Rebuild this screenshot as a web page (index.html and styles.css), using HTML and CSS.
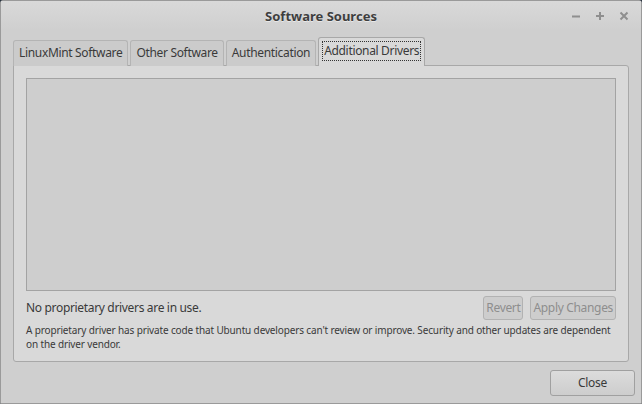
FILE: index.html
```html
<!DOCTYPE html>
<html>
<head>
<meta charset="utf-8">
<link rel="stylesheet" href="styles.css">
</head>
<body>
<div class="window">
  <div class="titlebar">
    <div class="title">Software Sources</div>
    <div class="controls">
      <svg class="ctl" width="10" height="10" viewBox="0 0 10 10"><path d="M1 5.5h8" stroke="#8f8f8f" stroke-width="2"/></svg>
      <svg class="ctl" width="10" height="10" viewBox="0 0 10 10"><path d="M1 5h8M5 1v8" stroke="#8f8f8f" stroke-width="2"/></svg>
      <svg class="ctl" width="10" height="10" viewBox="0 0 10 10"><path d="M1.5 1.5l7 7M8.5 1.5l-7 7" stroke="#8f8f8f" stroke-width="2"/></svg>
    </div>
  </div>
  <div class="body">
    <div class="tabs">
      <div class="tab">LinuxMint Software</div>
      <div class="tab">Other Software</div>
      <div class="tab">Authentication</div>
      <div class="tab active"><span class="focus">Additional Drivers</span></div>
    </div>
    <div class="panel">
      <div class="listbox"></div>
      <div class="statusrow">
        <div class="status">No proprietary drivers are in use.</div>
        <div class="btns">
          <button class="btn disabled">Revert</button>
          <button class="btn disabled">Apply Changes</button>
        </div>
      </div>
      <div class="note">A proprietary driver has private code that Ubuntu developers can't review or improve. Security and other updates are dependent on the driver vendor.</div>
    </div>
    <div class="footer">
      <button class="btn close">Close</button>
    </div>
  </div>
</div>
</body>
</html>
```

FILE: styles.css
```css
html, body {
  margin: 0;
  padding: 0;
  background: #2a3440;
}
body {
  width: 642px;
  height: 404px;
  overflow: hidden;
  font-family: "Noto Sans", "Open Sans", sans-serif;
  font-size: 12px;
  letter-spacing: -0.33px;
  color: #3a3a3a;
}
.window {
  width: 640px;
  height: 402px;
  border: 1px solid #9a9a9a;
  border-radius: 3px 3px 0 0;
  background: #cfcfcf;
  display: flex;
  flex-direction: column;
}
.titlebar {
  height: 29px;
  position: relative;
  display: flex;
  align-items: center;
  justify-content: center;
  background: linear-gradient(#d9d9d9, #cfcfcf);
}
.title {
  font-weight: bold;
  font-size: 13px;
  letter-spacing: 0;
  color: #3e3e3e;
  text-shadow: 0 1px 0 #e8e8e8;
}
.controls {
  position: absolute;
  right: 12px;
  top: 10px;
  display: flex;
  gap: 14px;
}
.ctl { display: block; }
.body {
  flex: 1;
  padding: 7px 12px 0 12px;
  display: flex;
  flex-direction: column;
}
.tabs {
  display: flex;
  gap: 2px;
  align-items: flex-end;
  height: 29px;
  position: relative;
  z-index: 1;
  margin-bottom: -1px;
}
.tab {
  height: 26px;
  box-sizing: border-box;
  padding: 0 5px 2px 5px;
  display: flex;
  align-items: center;
  border: 1px solid #b4b4b4;
  border-bottom: none;
  border-radius: 3px 3px 0 0;
  background: #cbcbcb;
  color: #3a3a3a;
}
.tab.active {
  height: 29px;
  background: #d9d9d9;
  border-color: #a8a8a8;
  padding: 0 3px 2px 3px;
}
.focus {
  border: 1px dotted #333;
  padding: 1px 1px;
  line-height: 16px;
}
.panel {
  height: 297px;
  box-sizing: border-box;
  border: 1px solid #a8a8a8;
  border-radius: 0 3px 3px 3px;
  background: #d9d9d9;
  padding: 12px 12px 0 12px;
  display: flex;
  flex-direction: column;
}
.listbox {
  height: 213px;
  box-sizing: border-box;
  border: 1px solid #a3a3a3;
  background: #cecece;
}
.statusrow {
  display: flex;
  justify-content: space-between;
  align-items: center;
  margin-top: 5px;
  height: 24px;
}
.status { font-size: 12px; padding-bottom: 2px; }
.btns { display: flex; gap: 7px; }
.btn {
  font-family: inherit;
  font-size: 12px;
  letter-spacing: -0.33px;
  height: 24px;
  box-sizing: border-box;
  border: 1px solid #a8a8a8;
  border-radius: 3px;
  background: linear-gradient(#d4d4d4, #c8c8c8);
  color: #3a3a3a;
  padding: 0 2px 2px 2px;
}
.btn.disabled {
  color: #8e8e8e;
  background: #cdcdcd;
  border-color: #b2b2b2;
}
.note {
  margin-top: 3px;
  font-size: 10px;
  letter-spacing: -0.14px;
  line-height: 14px;
}
.footer {
  display: flex;
  justify-content: flex-end;
  padding-top: 8px;
}
.btn.close {
  width: 85px;
  height: 26px;
  margin-right: -6px;
  background: linear-gradient(#dcdcdc, #cdcdcd);
  border-color: #a0a0a0;
}
```
